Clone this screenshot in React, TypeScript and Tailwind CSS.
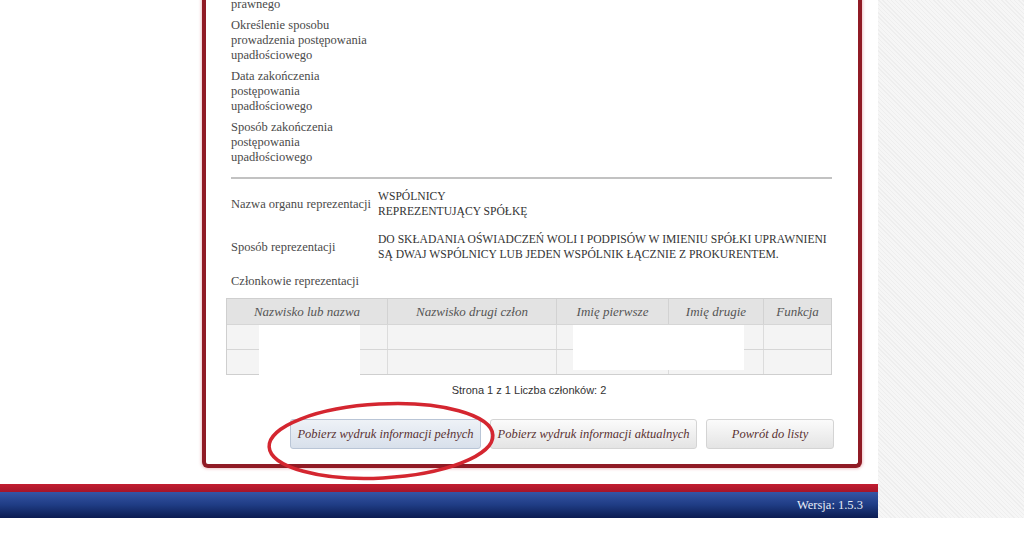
const serif = { fontFamily: '"Liberation Serif", "Times New Roman", serif' }

const labelGroups = [
  ['Określenie sposobu', 'prowadzenia postępowania', 'upadłościowego'],
  ['Data zakończenia', 'postępowania', 'upadłościowego'],
  ['Sposób zakończenia', 'postępowania', 'upadłościowego'],
]

const columns = [
  { name: 'Nazwisko lub nazwa', w: 'w-[160px]' },
  { name: 'Nazwisko drugi człon', w: 'w-[169px]' },
  { name: 'Imię pierwsze', w: 'w-[112px]' },
  { name: 'Imię drugie', w: 'w-[95px]' },
  { name: 'Funkcja', w: 'flex-1' },
]

function MembersTable() {
  return (
    <div className="relative -ml-[5px] w-[606px] border border-[#cfcfcf]">
      {/* header */}
      <div className="flex h-[25px] bg-[#e3e3e3]">
        {columns.map((c, i) => (
          <div
            key={c.name}
            className={`${c.w} flex items-center justify-center text-[13px] italic text-[#555] ${i > 0 ? 'border-l border-[#d2d2d2]' : ''}`}
          >
            {c.name}
          </div>
        ))}
      </div>
      {[0, 1].map((r) => (
        <div key={r} className="flex h-[25px] border-t border-[#d6d6d6] bg-[#f4f4f4]">
          {columns.map((c, i) => (
            <div key={c.name} className={`${c.w} ${i > 0 ? 'border-l border-[#dcdcdc]' : ''}`} />
          ))}
        </div>
      ))}
      {/* redacted areas */}
      <div className="absolute left-[32px] top-[26px] h-[50px] w-[101px] bg-white" />
      <div className="absolute left-[346px] top-[26px] h-[45px] w-[171px] bg-white" />
    </div>
  )
}

export default function App() {
  return (
    <div className="relative h-[549px] w-[1024px] overflow-hidden bg-white" style={serif}>
      <div className="flex h-[518px]">
        <div className="flex w-[878px] flex-col">
          <div className="flex-1">
            <div className="-mt-[3px] ml-[202px] w-[660px] rounded-b-[6px] border-x-4 border-b-4 border-[#901b25] bg-white pb-[15px] pl-[25px] pr-[26px] text-[12.5px] leading-[15px] text-[#4a4a4a] shadow-[0_0_3px_1px_rgba(210,80,90,0.35)]">
              <div>prawnego</div>
              {labelGroups.map((g, i) => (
                <div key={i} className="mt-[6px]">
                  {g.map((l) => (
                    <div key={l}>{l}</div>
                  ))}
                </div>
              ))}

              <div className="mt-[12px] h-[2px] bg-[#c2c2c2]" />

              <div className="mt-[10px] flex items-center">
                <div className="w-[147px] shrink-0">Nazwa organu reprezentacji</div>
                <div className="whitespace-nowrap text-[11.6px] text-[#333]">
                  <div>WSPÓLNICY</div>
                  <div>REPREZENTUJĄCY SPÓŁKĘ</div>
                </div>
              </div>
              <div className="mt-[13px] flex items-center">
                <div className="w-[147px] shrink-0">Sposób reprezentacji</div>
                <div className="whitespace-nowrap text-[11.6px] text-[#333]">
                  <div>DO SKŁADANIA OŚWIADCZEŃ WOLI I PODPISÓW W IMIENIU SPÓŁKI UPRAWNIENI</div>
                  <div>SĄ DWAJ WSPÓLNICY LUB JEDEN WSPÓLNIK ŁĄCZNIE Z PROKURENTEM.</div>
                </div>
              </div>
              <div className="mt-[12px]">Członkowie reprezentacji</div>

              <div className="mt-[9px]">
                <MembersTable />
              </div>

              <div
                className="mt-[9px] -ml-[5px] w-[606px] text-center text-[11px] leading-[13px] text-[#333]"
                style={{ fontFamily: '"Liberation Sans", Arial, sans-serif' }}
              >
                Strona 1 z 1 Liczba członków: 2
              </div>

              {/* buttons */}
              <div className="mt-[22px] flex justify-end gap-[9px] whitespace-nowrap text-[12.5px] italic text-[#5a3131]">
                <button className="h-[30px] w-[191px] rounded-[3px] border border-[#b9c5d6] bg-gradient-to-b from-[#eef2f7] to-[#d8e0eb]">
                  Pobierz wydruk informacji pełnych
                </button>
                <button className="h-[30px] w-[207px] rounded-[3px] border border-[#d4d4d4] bg-gradient-to-b from-[#fbfbfb] to-[#e4e4e4]">
                  Pobierz wydruk informacji aktualnych
                </button>
                <button className="-mr-[2px] h-[30px] w-[128px] rounded-[3px] border border-[#d4d4d4] bg-gradient-to-b from-[#fbfbfb] to-[#e4e4e4]">
                  Powrót do listy
                </button>
              </div>
            </div>
          </div>

          {/* footer */}
          <div className="h-[34px]">
            <div className="h-[8px] bg-gradient-to-b from-[#c21d30] to-[#a5152a]" />
            <div className="flex h-[26px] items-center justify-end bg-gradient-to-b from-[#3555a6] via-[#1f3c84] to-[#0b1c52] pr-[15px] text-[12.5px] text-[#e6ecf7]">
              Wersja: 1.5.3
            </div>
          </div>
        </div>
        <div className="flex-1 bg-[repeating-linear-gradient(45deg,#eeeeee_0px,#eeeeee_1px,#f6f6f6_1px,#f6f6f6_3px)]" />
      </div>

      {/* hand-drawn highlight */}
      <svg className="pointer-events-none absolute left-0 top-0" width="1024" height="549">
        <ellipse
          cx="381"
          cy="441"
          rx="112"
          ry="37"
          transform="rotate(-3 381 441)"
          fill="none"
          stroke="#d42630"
          strokeWidth="3.5"
        />
      </svg>
    </div>
  )
}
